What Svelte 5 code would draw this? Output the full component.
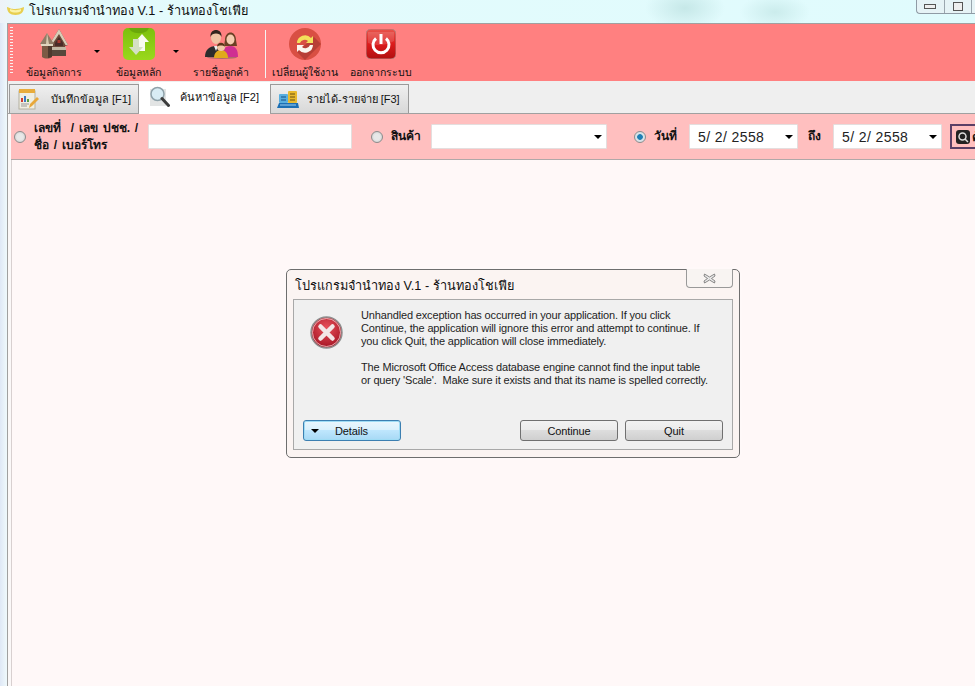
<script lang="ts">
	const tools = [
		{ label: 'ข้อมูลกิจการ', icon: 'house', menu: true, w: 85 },
		{ label: 'ข้อมูลหลัก', icon: 'updown', menu: true, w: 79 },
		{ label: 'รายชื่อลูกค้า', icon: 'people', menu: false, w: 86 }
	];
	const tabs = [
		{ label: 'บันทึกข้อมูล [F1]', icon: 'report', active: false, w: 130, gap: 12, pad: 8 },
		{ label: 'ค้นหาข้อมูล [F2]', icon: 'search', active: true, w: 131, gap: 10, pad: 9 },
		{ label: 'รายได้-รายจ่าย [F3]', icon: 'cash', active: false, w: 139, gap: 8, pad: 6 }
	];
</script>

{#snippet toolIcon(name: string)}
	{#if name === 'house'}
		<svg width="28" height="30" viewBox="0 0 28 30">
			<path d="M11 13 19 0l9 16-3 1v10H12z" fill="#6a4a3a" />
			<path d="M19 0l9 16h-2.500L19 5l-6 9-2-1z" fill="#d8cdb8" />
			<path d="M15 14l4-6 4 6v3h-8z" fill="#4a2c28" />
			<rect x="17.500" y="11" width="3" height="3" fill="#a83a30" />
			<rect x="12" y="18" width="14" height="3" fill="#c2b8a4" />
			<rect x="12" y="21" width="14" height="6" fill="#57483c" />
			<path d="M7 4 14 15H0z" fill="#8f7c66" />
			<path d="M7 4l2 11H6z" fill="#d6c8ae" />
			<rect x="1" y="15" width="12" height="2" fill="#e0d6c0" />
			<path d="M2 17h10v11c-3 2-7 2-10 0z" fill="#7b5a44" />
			<path d="M8 17h4v11l-4 1z" fill="#4e3a2e" />
		</svg>
	{:else if name === 'updown'}
		<svg width="32" height="32" viewBox="0 0 32 32">
			<defs>
				<linearGradient id="grn" x1="0" y1="0" x2="0" y2="1">
					<stop offset="0" stop-color="#7cc00c" />
					<stop offset="1" stop-color="#9ad81c" />
				</linearGradient>
			</defs>
			<rect width="32" height="32" rx="5" fill="url(#grn)" />
			<path d="M6 0h20l-2 3c-5 3-11 3-16 0z" fill="#6aa80a" />
			<path d="M19 6l7 8h-4v9h-6v-9h-4z" fill="#f8fbf0" />
			<path d="M13 27l-7-8h4v-8h6v8h4z" fill="#d4e0c4" />
		</svg>
	{:else if name === 'people'}
		<svg width="33" height="29" viewBox="0 0 33 29">
			<ellipse cx="17" cy="27.500" rx="15" ry="1.500" fill="#b06a6a" />
			<path d="M0 27c0-7 4-11 11-11s9 4 9 11z" fill="#2c2c2c" />
			<path d="M9 16l2 5 2-5z" fill="#f0f0f0" />
			<ellipse cx="11" cy="7.500" rx="5" ry="6.500" fill="#f0c4a4" />
			<path d="M5.500 7C5 1 9 0 11 0s6 1 5.500 7c-1-3-3-3.500-5.500-3.500S6.500 4 5.500 7z" fill="#33261e" />
			<path d="M20 10c0-10 11-10 11 0l1 6H19z" fill="#6b4024" />
			<ellipse cx="25.500" cy="9.500" rx="4" ry="5" fill="#f4ccb0" />
			<path d="M16 27c0-7 4-11 9.500-11S33 20 33 27z" fill="#cf2f92" />
			<path d="M9 28c0-5 3-8 7-8s7 3 7 8z" fill="#e0aa1c" />
			<circle cx="16" cy="17" r="4" fill="#f2c8a6" />
			<path d="M12 16.500c0-5 8-5 8 0-2-1.500-6-1.500-8 0z" fill="#5a3418" />
		</svg>
	{/if}
{/snippet}

{#snippet tabIcon(name: string)}
	{#if name === 'report'}
		<svg width="21" height="22" viewBox="0 0 21 22">
			<rect x="1" y="3" width="16" height="18" fill="#f0eee2" stroke="#b4b0a0" />
			<rect x="1" y="1" width="16" height="4" fill="#e8ac3c" />
			<rect x="3" y="10" width="2" height="4" fill="#d23c30" />
			<rect x="6" y="8" width="2" height="6" fill="#3d78c4" />
			<rect x="9" y="11" width="2" height="3" fill="#58a040" />
			<path d="M3 16h8M3 18h6" stroke="#999" />
			<path d="M11 20l1-4 7-7 2 2-7 7z" fill="#e8a83a" />
		</svg>
	{:else if name === 'search'}
		<svg width="21" height="22" viewBox="0 0 21 22">
			<rect x="1" y="3" width="16" height="17" fill="#e2e4e4" />
			<circle cx="8.500" cy="8" r="6.500" fill="#d8ecf4" stroke="#8fa2aa" stroke-width="1.500" />
			<path d="M13 12.500 19.500 19.500" stroke="#3c3c3c" stroke-width="3" stroke-linecap="round" />
		</svg>
	{:else}
		<svg width="22" height="19" viewBox="0 0 22 19">
			<path d="M2 13h19l1 5H0z" fill="#1c6fb4" />
			<rect x="2" y="4" width="9" height="9" rx="1" fill="#58aede" />
			<rect x="11" y="1" width="9" height="12" rx="1" fill="#e8b92e" />
			<path d="M13 4h5M13 7h5M13 10h5" stroke="#6a5110" />
			<path d="M4 7h5M4 10h5" stroke="#184f86" />
			<path d="M3 15h16" stroke="#9fd0f0" />
		</svg>
	{/if}
{/snippet}

<div class="window">
	<header class="titlebar">
		<svg class="gold" width="17" height="10" viewBox="0 0 17 10">
			<path d="M0 1c3 1 4 2 8 2s6-1 9-2c0 5-3 8-8.500 8S0 6 0 1z" fill="#e8cf50" />
			<path d="M3 3c3 1.500 8 1.500 11 0v2c-3 2-8 2-11 0z" fill="#fbf3a8" />
		</svg>
		<span class="title">โปรแกรมจำนำทอง V.1 - ร้านทองโชเฟีย</span>
		<div class="controls">
			<span class="ctl"><i class="min"></i></span>
			<span class="ctl"><i class="max"></i></span>
			<span class="ctl last"></span>
		</div>
	</header>

	<div class="frame">
		<nav class="toolbar">
			<span class="grip"></span>
			{#each tools as tool (tool.label)}
				<div class="tool" class:has-menu={tool.menu} style:width="{tool.w}px">
					<span class="tool-icon">{@render toolIcon(tool.icon)}</span>
					<span class="tool-label">{tool.label}</span>
					{#if tool.menu}<span class="menu-arrow"></span>{/if}
				</div>
			{/each}
			<span class="sep"></span>
			<div class="tool switch">
				<span class="tool-icon">
					<svg width="32" height="32" viewBox="0 0 32 32">
						<defs>
							<clipPath id="disc"><circle cx="16" cy="16" r="16" /></clipPath>
						</defs>
						<circle cx="16" cy="16" r="16" fill="#d94f43" />
						<path d="M25 9 32 16 16 32 8 24z" fill="#b83f36" clip-path="url(#disc)" />
						<path d="M8 15a8 8 0 0 1 14-5l2-2v7h-7l2-2a5 5 0 0 0-8 2z" fill="#f3e05a" />
						<path d="M24 17a8 8 0 0 1-14 5l-2 2v-7h7l-2 2a5 5 0 0 0 8-2z" fill="#fbf6ee" />
					</svg>
				</span>
				<span class="tool-label">เปลี่ยนผู้ใช้งาน</span>
			</div>
			<div class="tool quit">
				<span class="tool-icon">
					<svg width="30" height="30" viewBox="0 0 30 30">
						<defs>
							<linearGradient id="rd" x1="0" y1="0" x2="0" y2="1">
								<stop offset="0" stop-color="#e8554c" />
								<stop offset="0.5" stop-color="#dc1c1c" />
								<stop offset="1" stop-color="#b01010" />
							</linearGradient>
						</defs>
						<rect width="30" height="30" rx="5" fill="url(#rd)" stroke="#b8807c" />
						<path d="M2 3h26v9c-8 5-18 5-26 2z" fill="#fff" opacity="0.14" />
						<path d="M10 9.500a8 8 0 1 0 10 0" fill="none" stroke="#fff" stroke-width="3" />
						<path d="M15 5v10" stroke="#fff" stroke-width="3" />
					</svg>
				</span>
				<span class="tool-label">ออกจากระบบ</span>
			</div>
		</nav>

		<div class="tabs">
			{#each tabs as tab (tab.label)}
				<div
					class="tab"
					class:active={tab.active}
					style:width="{tab.w}px"
					style:gap="{tab.gap}px"
					style:padding-left="{tab.pad}px"
				>
					{@render tabIcon(tab.icon)}
					<span>{tab.label}</span>
				</div>
			{/each}
		</div>

		<form class="filters">
			<span class="radio"></span>
			<span class="field-label wide">เลขที่ &nbsp;/ เลข ปชช. /<br />ชื่อ / เบอร์โทร</span>
			<span class="input name"></span>
			<span class="radio second"></span>
			<span class="field-label product">สินค้า</span>
			<span class="input combo product-box"><i class="arrow"></i></span>
			<span class="radio checked"></span>
			<span class="field-label day">วันที่</span>
			<span class="input combo date">5/ 2/ 2558<i class="arrow"></i></span>
			<span class="field-label until">ถึง</span>
			<span class="input combo date">5/ 2/ 2558<i class="arrow"></i></span>
			<span class="find">
				<svg width="14" height="14" viewBox="0 0 14 14">
					<rect width="14" height="14" rx="3" fill="#222" />
					<circle cx="6.500" cy="6.500" r="3.500" fill="none" stroke="#ddd" stroke-width="1.500" />
					<path d="M9 9l3 3" stroke="#ddd" stroke-width="1.500" />
				</svg>
				<b>ค้นหา</b>
			</span>
		</form>

		<main class="content">
			<div class="dialog">
				<div class="dialog-title">
					<span>โปรแกรมจำนำทอง V.1 - ร้านทองโชเฟีย</span>
					<span class="close">
						<svg width="13" height="11" viewBox="0 0 13 11">
							<path d="M1.500 1 6.500 4 11.500 1 12 3 8.500 5.500 12 8 11.500 10 6.500 7 1.500 10 1 8 4.500 5.500 1 3z" fill="#e8e8e8" stroke="#6e6e6e" stroke-width="0.800" />
						</svg>
					</span>
				</div>
				<div class="dialog-body">
					<div class="message">
						<svg class="err" width="33" height="33" viewBox="0 0 33 33">
							<defs>
								<radialGradient id="er" cx="0.500" cy="0.350" r="0.700">
									<stop offset="0" stop-color="#e8505a" />
									<stop offset="1" stop-color="#a01020" />
								</radialGradient>
							</defs>
							<circle cx="16.500" cy="16.500" r="15.500" fill="url(#er)" stroke="#8f8f8f" stroke-width="1.500" />
							<circle cx="16.500" cy="16.500" r="14" fill="none" stroke="#f0d0d0" stroke-width="0.800" />
							<path d="M10.500 10.500 22.500 22.500M22.500 10.500 10.500 22.500" stroke="#f2e6e6" stroke-width="4.500" stroke-linecap="round" />
						</svg>
						<div class="copy">
							<p>Unhandled exception has occurred in your application. If you click<br />Continue, the application will ignore this error and attempt to continue. If<br />you click Quit, the application will close immediately.</p>
							<p>The Microsoft Office Access database engine cannot find the input table<br />or query 'Scale'.&nbsp; Make sure it exists and that its name is spelled correctly.</p>
						</div>
					</div>
					<div class="buttons">
						<button class="btn details" type="button"><i></i><span>Details</span></button>
						<span class="spacer"></span>
						<button class="btn" type="button">Continue</button>
						<button class="btn" type="button">Quit</button>
					</div>
				</div>
			</div>
		</main>
	</div>
</div>

<style>
	:global(body) {
		margin: 0;
		background: #dff9fb;
		overflow: hidden;
	}

	.window {
		width: 975px;
		height: 686px;
		display: flex;
		flex-direction: column;
		font-family: 'Liberation Sans', 'Noto Sans', Tahoma, sans-serif;
		color: #111;
		background: linear-gradient(90deg, #dfe8f6 0, #edf7fb 6px, #e6fbfc 100%);
		overflow: hidden;
	}

	.titlebar {
		height: 23px;
		flex: none;
		box-sizing: border-box;
		padding: 0 0 2px 7px;
		display: flex;
		align-items: center;
		font-size: 12.7px;
		position: relative;
		background:
			radial-gradient(ellipse 40px 22px at 685px 8px, #c6e8e8, transparent),
			radial-gradient(ellipse 35px 18px at 775px 12px, #cbecec, transparent),
			linear-gradient(90deg, #eef2f8 0, #e4fbfc 30px, #e0fbfd 100%);
	}

	.gold {
		margin-right: 5px;
	}

	.controls {
		position: absolute;
		right: 0;
		top: -1px;
		display: flex;
		height: 14px;
		width: 58px;
		border: 1px solid #8f9ba5;
		border-top: 0;
		border-right: 0;
		border-radius: 0 0 0 4px;
		background: #e6f3f6;
	}

	.ctl {
		width: 27px;
		display: flex;
		align-items: center;
		justify-content: center;
		border-right: 1px solid #9aa6ae;
	}

	.ctl.last {
		width: 3px;
		border: 0;
	}

	.min {
		width: 10px;
		height: 3px;
		border: 1px solid #555;
		background: #eee;
	}

	.max {
		width: 8px;
		height: 7px;
		border: 1px solid #555;
		background: #eee;
	}

	.frame {
		flex: 1;
		margin-left: 7px;
		display: flex;
		flex-direction: column;
		border-left: 1px solid #a0a0a0;
		border-top: 1px solid #a0a0a0;
		min-height: 0;
		background: #fbf8f8;
	}

	.toolbar {
		height: 57px;
		flex: none;
		background: #ff8080;
		display: flex;
		align-items: stretch;
		padding-left: 2px;
	}

	.grip {
		width: 3px;
		margin: 3px 1px 0 0;
		height: 47px;
		background: repeating-linear-gradient(180deg, #f8f0f0 0 1px, #ff8080 1px 3px);
	}

	.tool {
		position: relative;
		display: flex;
		flex-direction: column;
		align-items: center;
		font-size: 10.5px;
		padding-top: 3px;
		box-sizing: border-box;
	}

	.tool.has-menu:first-of-type {
		padding-right: 5px;
	}

	.tool.switch {
		width: 78px;
	}

	.tool.quit {
		width: 74px;
	}

	.tool-icon {
		height: 34px;
		display: flex;
		align-items: center;
	}

	.tool-label {
		margin-top: 3px;
		white-space: nowrap;
	}

	.menu-arrow {
		position: absolute;
		right: -1px;
		top: 26px;
		border: 3px solid transparent;
		border-top: 3px solid #000;
		border-bottom: 0;
	}

	.sep {
		width: 1px;
		margin: 6px 0 3px 1px;
		background: #f4f4f4;
	}

	.tabs {
		height: 33px;
		flex: none;
		display: flex;
		align-items: flex-end;
		padding-left: 1px;
		border-bottom: 1px solid #a0a0a0;
		font-size: 11px;
		box-sizing: border-box;
		background: #efefef;
	}

	.tab {
		height: 29px;
		display: flex;
		align-items: center;
		box-sizing: border-box;
		border: 1px solid #9a9a9a;
		border-bottom: 0;
		background: linear-gradient(180deg, #efefef, #d8d8d8);
	}

	.tab.active {
		height: 32px;
		margin-bottom: -1px;
		background: #fff;
		border-color: #fff;
		z-index: 1;
		padding-bottom: 4px;
	}

	.filters {
		height: 46px;
		flex: none;
		margin-left: 3px;
		background: #ffbfbf;
		border-bottom: 1px solid #b0a8a8;
		box-sizing: border-box;
		display: flex;
		align-items: center;
		padding-left: 3px;
		font-size: 12px;
		overflow: hidden;
	}

	.radio {
		width: 12px;
		height: 12px;
		flex: none;
		box-sizing: border-box;
		border-radius: 50%;
		border: 1px solid #8c8c8c;
		background: radial-gradient(circle, #e8e8e8 40%, #c8c8c8);
	}

	.radio.second {
		margin-left: 19px;
	}

	.radio.checked {
		margin-left: 27px;
		background: radial-gradient(circle, #1f7fb5 35%, #d8e2e8 45%);
	}

	.field-label {
		font-weight: 700;
		white-space: nowrap;
		margin-left: 8px;
		line-height: 17px;
		flex: none;
	}

	.field-label.wide {
		width: 114px;
		font-size: 12px;
		word-spacing: 1.5px;
	}

	.field-label.product {
		width: 40px;
	}

	.field-label.day {
		width: 35px;
	}

	.field-label.until {
		margin-left: 10px;
		width: 25px;
	}

	.input {
		height: 25px;
		flex: none;
		background: #fff;
		border: 1px solid #e4dede;
		box-sizing: border-box;
		border-radius: 1px;
		position: relative;
	}

	.name {
		width: 204px;
	}

	.product-box {
		width: 176px;
	}

	.combo {
		display: flex;
		align-items: center;
		padding-left: 8px;
		font-size: 14px;
		letter-spacing: 0.4px;
		color: #222;
	}

	.date {
		width: 109px;
		white-space: pre;
	}

	.arrow {
		position: absolute;
		right: 4px;
		top: 10px;
		border: 4px solid transparent;
		border-top: 4px solid #000;
		border-bottom: 0;
	}

	.find {
		margin-left: 8px;
		width: 60px;
		height: 25px;
		flex: none;
		box-sizing: border-box;
		border: 2px solid #5a3f66;
		background: #ffbfbf;
		display: flex;
		align-items: center;
		gap: 2px;
		padding-left: 4px;
	}

	.content {
		flex: 1;
		margin-left: 3px;
		background: #fff8f8;
		position: relative;
		border-left: 1px solid #d8d0d0;
	}

	/* the error box floats over the empty form */
	.dialog {
		position: absolute;
		left: 274px;
		top: 109px;
		width: 454px;
		height: 189px;
		box-sizing: border-box;
		border: 1px solid #6e6e6e;
		border-radius: 5px;
		background: #fbf4f2;
		padding: 0 6px 7px;
		display: flex;
		flex-direction: column;
		box-shadow: 0 0 4px rgba(255, 255, 255, 0.6);
	}

	.dialog-title {
		height: 28px;
		display: flex;
		align-items: center;
		padding: 1px 0 0 2px;
		font-size: 12.7px;
		flex: none;
		position: relative;
	}

	.close {
		position: absolute;
		right: 0;
		top: -1px;
		width: 47px;
		height: 19px;
		box-sizing: border-box;
		border: 1px solid #999;
		border-top: 0;
		border-radius: 0 0 4px 4px;
		display: flex;
		align-items: center;
		justify-content: center;
		background: #f8f4f2;
	}

	.dialog-body {
		flex: 1;
		min-height: 0;
		border: 1px solid #a8a8a8;
		background: #f0f0f0;
		display: flex;
		flex-direction: column;
		padding: 9px 9px 8px;
	}

	.message {
		flex: 1;
		display: flex;
	}

	.err {
		margin: 7px 0 0 7px;
		flex: none;
	}

	.copy {
		margin-left: 18px;
		font-size: 11px;
		letter-spacing: -0.15px;
		line-height: 13px;
		color: #1e1e1e;
		white-space: nowrap;
	}

	.copy p {
		margin: 0 0 13px;
	}

	.buttons {
		display: flex;
		gap: 7px;
	}

	.spacer {
		flex: 1;
	}

	.btn {
		width: 98px;
		height: 21px;
		padding: 0;
		font: 11px 'Liberation Sans', sans-serif;
		letter-spacing: -0.1px;
		color: #111;
		border: 1px solid #707070;
		border-radius: 3px;
		background: linear-gradient(180deg, #f2f2f2 0, #ebebeb 48%, #dddddd 50%, #cfcfcf 100%);
	}

	.btn.details {
		border-color: #3c7fb1;
		background: linear-gradient(180deg, #eaf6fd 0, #d9f0fc 48%, #bee6fd 50%, #a7d9f5 100%);
		display: flex;
		align-items: center;
		padding-left: 7px;
		box-shadow: inset 0 0 0 1px #9fdcf5;
	}

	.btn.details i {
		border: 4px solid transparent;
		border-top: 4px solid #000;
		border-bottom: 0;
		margin-right: 16px;
	}
</style>
